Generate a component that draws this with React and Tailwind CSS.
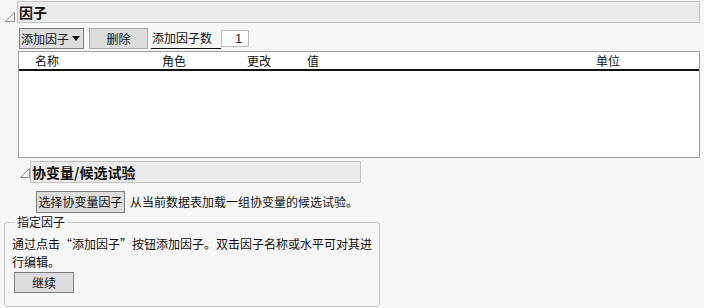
import React from "react";

const font = { fontFamily: '"Noto Sans CJK SC", "Microsoft YaHei", sans-serif' };

// small outline triangle used by the collapsible outline headers
function Disclosure() {
  return (
    <svg width="10" height="10" viewBox="0 0 10 10" className="shrink-0">
      <polygon points="9.5,0.5 9.5,9.5 0.5,9.5" fill="none" stroke="#8c8c8c" strokeWidth="1" />
    </svg>
  );
}

function Caret() {
  return (
    <svg width="8" height="5" viewBox="0 0 8 5" className="shrink-0">
      <polygon points="0,0 8,0 4,5" fill="#111" />
    </svg>
  );
}

export default function App() {
  const columns = [
    { label: "名称", w: "w-[127px]" },
    { label: "角色", w: "w-[85px]" },
    { label: "更改", w: "w-[60px]" },
    { label: "值", w: "w-[289px]" },
    { label: "单位", w: "w-[60px]" },
  ];

  return (
    <div
      className="w-[704px] h-[308px] bg-[#f7f7f7] overflow-hidden text-[12px] text-[#111]"
      style={font}
    >
      {/* 因子 outline header */}
      <div className="flex items-end h-[22px] mt-[1px]">
        <div className="ml-[5px] mb-[1px]">
          <Disclosure />
        </div>
        <div className="ml-[2px] mr-[4px] flex-1 h-full flex items-center bg-[#ebebeb] border border-[#c3c3c3] pl-[1px] text-[14px] font-bold leading-none">
          因子
        </div>
      </div>

      {/* toolbar */}
      <div className="flex items-center h-[21px] mt-[5px] ml-[19px]">
        <div className="w-[65px] h-[21px] flex items-center pl-[1px] pr-[3px] bg-[#dddddd] border border-[#7d7d7d] leading-none">
          <span>添加因子</span>
          <span className="ml-auto">
            <Caret />
          </span>
        </div>
        <div className="ml-[5px] w-[59px] h-[21px] flex items-center justify-center bg-[#dddddd] border border-[#a9a9a9] leading-none">
          删除
        </div>
        <div className="ml-[3px] w-[70px] h-[21px] flex items-center pl-[1px] border-b border-[#111] leading-none">
          添加因子数
        </div>
        <div
          className="w-[28px] h-[17px] flex items-center justify-end pr-[6px] bg-white border border-[#bdbdbd] leading-none"
          style={{ fontFamily: '"Liberation Sans", sans-serif' }}
        >
          1
        </div>
      </div>

      {/* factor table */}
      <div className="mt-[2px] ml-[18px] mr-[4px] h-[107px] bg-white border border-[#a0a0a0]">
        <div className="flex items-center h-[19px] pl-[16px] border-b-2 border-[#111] leading-none">
          {columns.map((c) => (
            <span key={c.label} className={c.w}>
              {c.label}
            </span>
          ))}
        </div>
      </div>

      {/* 协变量/候选试验 outline header */}
      <div className="flex items-end h-[22px] mt-[3px]">
        <div className="ml-[20px] mb-[5px]">
          <Disclosure />
        </div>
        <div className="w-[331px] h-full flex items-center bg-[#ebebeb] border border-[#c3c3c3] pl-[1px] text-[14px] font-bold leading-none">
          协变量/候选试验
        </div>
      </div>

      <div className="flex items-center mt-[8px] ml-[36px]">
        <div className="w-[89px] h-[22px] flex items-center justify-center bg-[#dddddd] border border-[#7d7d7d] leading-none">
          选择协变量因子
        </div>
        <span className="ml-[5px] leading-none">从当前数据表加载一组协变量的候选试验。</span>
      </div>

      {/* 指定因子 group */}
      <fieldset className="mt-[1px] ml-[4px] w-[376px] h-[93px] border border-[#c6c6c6] rounded-[3px] px-[7px]">
        <legend className="ml-[3px] px-[2px] leading-[16px]">指定因子</legend>
        <div className="mt-[5px] leading-[18px]">
          通过点击“添加因子”按钮添加因子。双击因子名称或水平可对其进
          <br />
          行编辑。
        </div>
        <div className="mt-[1px] ml-[2px] w-[60px] h-[21px] flex items-center justify-center bg-[#dddddd] border border-[#7d7d7d] leading-none">
          继续
        </div>
      </fieldset>
    </div>
  );
}
